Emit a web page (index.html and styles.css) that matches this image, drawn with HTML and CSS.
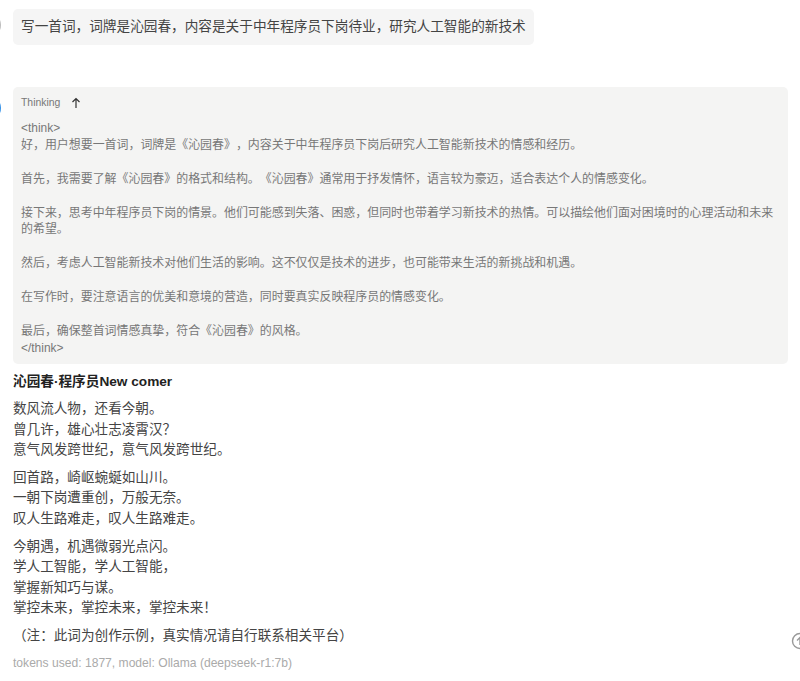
FILE: index.html
```html
<!DOCTYPE html>
<html lang="zh">
<head>
<meta charset="utf-8">
<title>Chat</title>
<link rel="stylesheet" href="styles.css">
</head>
<body>
<main class="chat">
  <section class="message message-user">
    <div class="avatar avatar-user"></div>
    <div class="bubble">写一首词，词牌是沁园春，内容是关于中年程序员下岗待业，研究人工智能的新技术</div>
  </section>
  <section class="message message-bot">
    <div class="avatar avatar-bot"></div>
    <div class="content">
      <div class="thinking">
        <div class="thinking-head">
          <span class="thinking-label">Thinking</span>
          <svg class="thinking-arrow" width="10" height="12" viewBox="0 0 10 12"><path d="M5 11V1.5M1.5 5L5 1.5 8.5 5" fill="none" stroke="#333" stroke-width="1.2"/></svg>
        </div>
        <div class="thinking-body">&lt;think&gt;
好，用户想要一首词，词牌是《沁园春》，内容关于中年程序员下岗后研究人工智能新技术的情感和经历。

首先，我需要了解《沁园春》的格式和结构。《沁园春》通常用于抒发情怀，语言较为豪迈，适合表达个人的情感变化。

接下来，思考中年程序员下岗的情景。他们可能感到失落、困惑，但同时也带着学习新技术的热情。可以描绘他们面对困境时的心理活动和未来的希望。

然后，考虑人工智能新技术对他们生活的影响。这不仅仅是技术的进步，也可能带来生活的新挑战和机遇。

在写作时，要注意语言的优美和意境的营造，同时要真实反映程序员的情感变化。

最后，确保整首词情感真挚，符合《沁园春》的风格。
&lt;/think&gt;</div>
      </div>
      <h3 class="poem-title">沁园春·程序员New comer</h3>
      <p class="stanza">数风流人物，还看今朝。<br>曾几许，雄心壮志凌霄汉？<br>意气风发跨世纪，意气风发跨世纪。</p>
      <p class="stanza">回首路，崎岖蜿蜒如山川。<br>一朝下岗遭重创，万般无奈。<br>叹人生路难走，叹人生路难走。</p>
      <p class="stanza">今朝遇，机遇微弱光点闪。<br>学人工智能，学人工智能，<br>掌握新知巧与谋。<br>掌控未来，掌控未来，掌控未来！</p>
      <p class="stanza">（注：此词为创作示例，真实情况请自行联系相关平台）</p>
      <p class="meta">tokens used: 1877, model: Ollama (deepseek-r1:7b)</p>
    </div>
  </section>
</main>
<div class="scroll-btn">
  <svg width="20" height="20" viewBox="0 0 20 20"><circle cx="10" cy="10" r="7.5" fill="#fff" stroke="#999" stroke-width="1.4"/><path d="M10 14V6.5M7 9.5L10 6.5 13 9.5" fill="none" stroke="#999" stroke-width="1.4"/></svg>
</div>
</body>
</html>
```
FILE: styles.css
```css
* { box-sizing: border-box; }
html, body { margin: 0; height: 100%; }
body {
  overflow: hidden;
  background: #fff;
  color: #444;
  font-family: "Liberation Sans", "Noto Sans CJK SC", sans-serif;
  text-spacing-trim: space-all;
  position: relative;
}
.chat { padding: 9px 12px 0 0; }
.message { display: flex; gap: 12px; align-items: flex-start; }
.message-bot { margin-top: 42px; }
.avatar {
  flex: none;
  width: 24px;
  height: 24px;
  margin-left: -23px;
  border-radius: 50%;
}
.avatar-user { background: #bbb; margin-top: 4px; }
.avatar-bot { background: #2f8fe8; margin-top: 9px; }
.bubble {
  background: #f5f5f5;
  border-radius: 5px;
  padding: 0 8px;
  height: 36px;
  font-size: 13.65px;
  line-height: 36px;
  color: #444;
  white-space: nowrap;
}
.content { flex: 1; min-width: 0; }
.thinking {
  background: #f4f4f3;
  border-radius: 5px;
  height: 277px;
  padding: 8px 8px 0;
}
.thinking-head { display: flex; align-items: center; gap: 11px; height: 15px; }
.thinking-label { font-size: 10.4px; color: #777; }
.thinking-arrow { display: block; }
.thinking-body {
  margin-top: 10px;
  font-size: 11.95px;
  line-height: 16.9px;
  color: #777;
  white-space: pre-wrap;
}
.poem-title {
  margin: 9px 0 0;
  font-size: 13.65px;
  line-height: 17px;
  font-weight: 700;
  color: #222;
}
.stanza {
  margin: 7px 0 0;
  font-size: 13.6px;
  line-height: 20.6px;
  color: #444;
}
.poem-title + .stanza { margin-top: 9px; }
.meta {
  margin: 8px 0 0;
  font-size: 12.1px;
  line-height: 17px;
  color: #aaa;
}
.scroll-btn {
  position: absolute;
  left: 790px;
  top: 631px;
  line-height: 0;
}
```
